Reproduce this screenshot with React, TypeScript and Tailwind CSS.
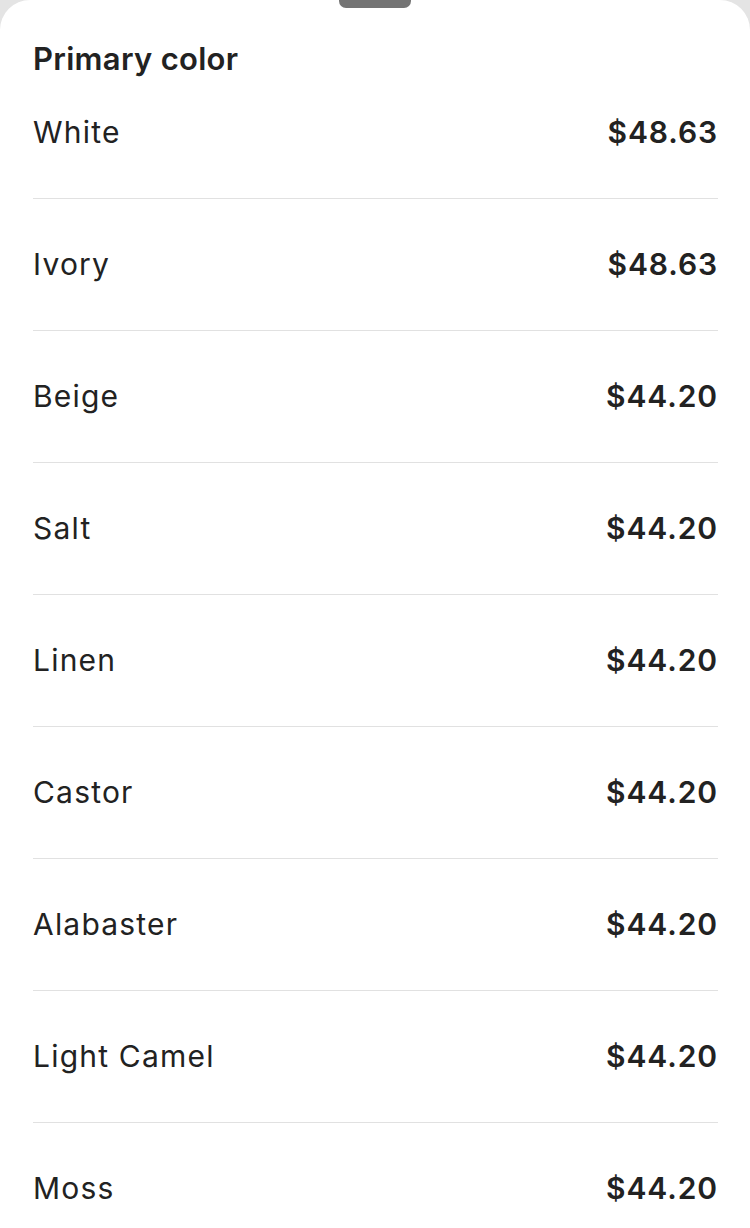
const colors = [
  { name: 'White', price: '$48.63' },
  { name: 'Ivory', price: '$48.63' },
  { name: 'Beige', price: '$44.20' },
  { name: 'Salt', price: '$44.20' },
  { name: 'Linen', price: '$44.20' },
  { name: 'Castor', price: '$44.20' },
  { name: 'Alabaster', price: '$44.20' },
  { name: 'Light Camel', price: '$44.20' },
  { name: 'Moss', price: '$44.20' },
]

export default function App() {
  return (
    <div className="h-[1228px] w-[750px] overflow-hidden bg-[#e4e4e4]">
      <div
        className="relative h-full rounded-t-[30px] bg-white text-[#222222]"
        style={{ fontFamily: 'Inter, "Liberation Sans", sans-serif' }}
      >
        <div className="absolute top-[-6px] left-[339px] h-[14px] w-[72px] rounded-full bg-[#747474]" />
        <div className="px-[33px] pr-[32px]">
          <h2 className="h-[67px] pt-[43px] text-[31px] font-semibold leading-none tracking-[0.3px]">
            Primary color
          </h2>
          {colors.map(c => (
            <div
              key={c.name}
              className="flex h-[132px] items-center justify-between border-b-[1.5px] border-[#e1e1e1] pb-[1px]"
            >
              <span className="text-[30px] font-normal leading-none tracking-[1.2px]">{c.name}</span>
              <span className="text-[30px] font-semibold leading-none tracking-[0.9px]">{c.price}</span>
            </div>
          ))}
        </div>
      </div>
    </div>
  )
}
